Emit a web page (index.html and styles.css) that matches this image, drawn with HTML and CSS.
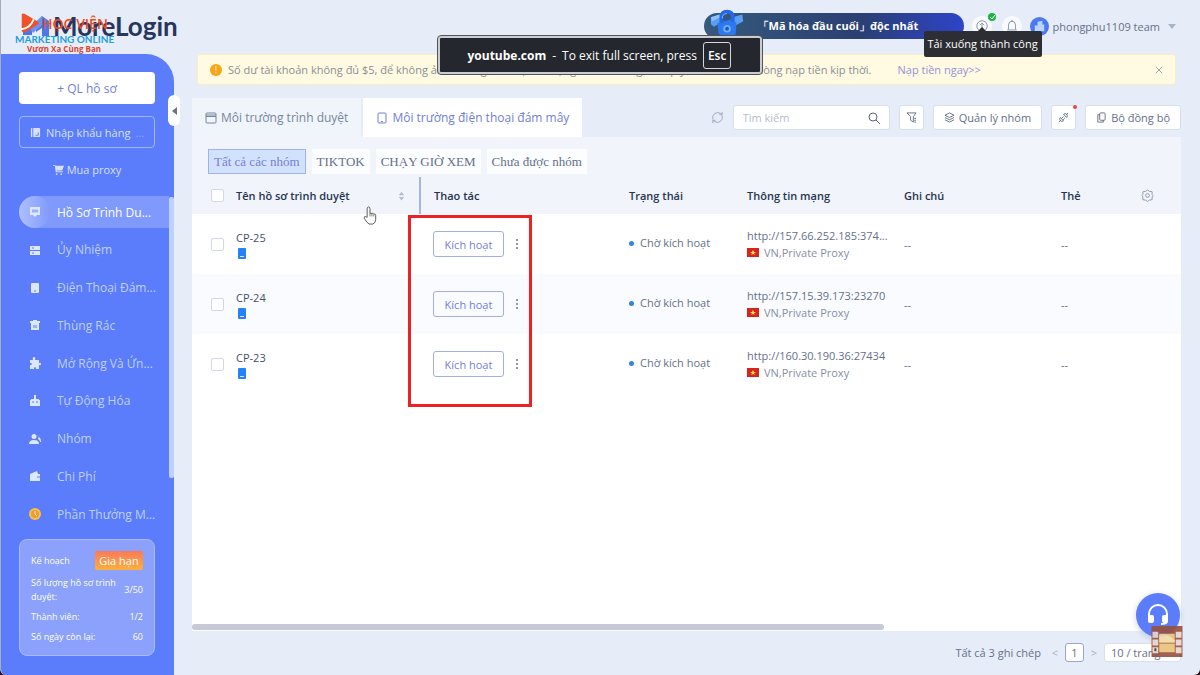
FILE: index.html
```html
<!DOCTYPE html>
<html lang="vi">
<head>
  <meta charset="UTF-8"/>
  <meta name="viewport" content="width=device-width,initial-scale=1.0"/>
  <title>MoreLogin</title>
  <link rel="stylesheet" href="styles.css">
</head>
<body>
<div class="app">
  <header class="topbar">
    <div class="brand">
      <svg class="brand-mark" viewBox="0 0 32 26"><path d="M2 22V4l9 8v10zM15 12l6-9 7 5v15h-7v-8l-6 4z" fill="#4b78e6"/><path d="M2 4l9 8 10-9v9l-9 8z" fill="#6d93f5"/></svg>
      <span class="brand-name">MoreLogin</span>
      <div class="watermark">
        <svg class="wm-play" viewBox="0 0 24 24"><path d="M3 3Q3 1 6 2l14 8q3 2 0 4L7 22q-4 1-4-2z" fill="#f0502a"/><path d="M2 19q10-1 14-11" fill="none" stroke="#fff" stroke-width="2"/></svg>
        <span class="wm-top">HỌC VIỆN</span>
        <span class="wm-mid">MARKETING ONLINE</span>
        <span class="wm-low">Vươn Xa Cùng Bạn</span>
      </div>
    </div>
    <a class="promo" href="#">
      <svg class="promo-art" viewBox="0 0 40 30"><path d="M2 8l9-3 3 8-9 5-3-3zM25 8l10-3 1 7-9 5z" fill="#5b9ff5"/><path d="M2 8l9-3 1 3-9 4z" fill="#8fc2ff"/><path d="M9 14l15-4 5 4-1 12-12 3-6-4z" fill="#2b78f2"/><path d="M13 14V8q0-6 6-6t6 6v5" fill="none" stroke="#2467e8" stroke-width="4"/><path d="M14 9q0-5 5-5" fill="none" stroke="#7db6ff"/><circle cx="19" cy="20" r="4" fill="#6fb0ff"/><circle cx="19" cy="20" r="2" fill="#1d56d4"/></svg>
      「Mã hóa đầu cuối」độc nhất
    </a>
    <button class="round" aria-label="Tải xuống">
      <svg viewBox="0 0 16 16"><circle cx="8" cy="8" r="6"/><path d="M8 11.500V5M5.500 7L8 4.500 10.500 7"/></svg>
      <span class="ok"><svg viewBox="0 0 8 8"><path d="M2 4l2 2 3-4"/></svg></span>
      <span class="tip">Tải xuống thành công</span>
    </button>
    <button class="round" aria-label="Thông báo"><svg viewBox="0 0 16 16"><path d="M2.500 12.500h11M4 12V7q0-4.500 4-4.500T12 7v5M6.500 14.500h3M8 1v1.500"/></svg></button>
    <button class="account">
      <svg class="avatar" viewBox="0 0 20 20"><circle cx="10" cy="10" r="10" fill="#4c78f0"/><path d="M5 15V9h3V5l5-1v11zM13 8h2v7h-2z" fill="#b9d5ff"/></svg>
      phongphu1109 team<span class="caret"></span>
    </button>
  </header>

  <div class="body">
    <aside class="sidebar">
      <button class="side-btn solid">+ QL hồ sơ</button>
      <button class="side-btn outline"><svg viewBox="0 0 12 12"><rect x="1" y="1" width="10" height="10" rx="1" fill="currentColor"/><path d="M3 1v10M6 9h3V6" stroke="#5b7cfb" fill="none"/></svg>Nhập khẩu hàng<span class="dots">...</span></button>
      <a class="side-link" href="#"><svg viewBox="0 0 12 12"><path d="M0 1h2l1 1h9l-2 5H4v1h7v1H3L2 2H0z" fill="currentColor"/><circle cx="4" cy="11" r="1" fill="currentColor"/><circle cx="9" cy="11" r="1" fill="currentColor"/></svg>Mua proxy</a>
      <nav class="menu">
        <a class="active" href="#"><span class="ico"><svg viewBox="0 0 12 12"><path d="M1 1h10v8H8l-2 2-2-2H1z"/><path class="cut" d="M4 3.500v3M6 3.500v3M8 3.500v3"/></svg></span>Hồ Sơ Trình Du...</a>
        <a href="#"><span class="ico"><svg viewBox="0 0 12 12"><path d="M1 2h10v4H1zM1 7h10v4H1z"/><path class="cut" d="M3 4h2M3 9h2"/></svg></span>Ủy Nhiệm</a>
        <a href="#"><span class="ico"><svg viewBox="0 0 12 12"><rect x="2" y="1" width="8" height="10" rx="1"/><path class="cut" d="M5 9h2"/></svg></span>Điện Thoại Đám...</a>
        <a href="#"><span class="ico"><svg viewBox="0 0 12 12"><path d="M1 2h3V1h4v1h3v2H1zM2 4h8v7H2z"/><path class="cut" d="M5 6v3M7 6v3"/></svg></span>Thùng Rác</a>
        <a href="#"><span class="ico"><svg viewBox="0 0 12 12"><path d="M1 3h3q-1-3 1-3t1 3h4v3q2-1 2 1t-2 1v4H7q0-2-1-2t-1 2H1V8q2 0 2-1T1 6z"/></svg></span>Mở Rộng Và Ứn...</a>
        <a href="#"><span class="ico"><svg viewBox="0 0 12 12"><path d="M5 0h2v4h3v1h1v6H1V5h1V4h3z"/><path class="cut" d="M4 6v2M8 6v2"/></svg></span>Tự Động Hóa</a>
        <a href="#"><span class="ico"><svg viewBox="0 0 12 12"><circle cx="5" cy="3.500" r="2.500"/><path d="M0 11q0-4 5-4t5 4zM8 2q3 1 1 4 2 1 2 3h1q0-3-1-4z"/></svg></span>Nhóm</a>
        <a href="#"><span class="ico"><svg viewBox="0 0 12 12"><path d="M1 4l7-3 1 3h2v7H1z"/><path class="cut" d="M11 7H8"/></svg></span>Chi Phí</a>
        <a href="#"><span class="ico"><svg viewBox="0 0 12 12"><circle cx="6" cy="6" r="6" fill="#f6c344"/><circle cx="6" cy="6" r="4" fill="#f09a3e"/><path d="M6 3v3l2 2" stroke="#ffe9a8" fill="none"/></svg></span>Phần Thưởng M...</a>
      </nav>
      <span class="side-scroll"></span>
      <button class="collapse" aria-label="Thu gọn"></button>
      <section class="plan">
        <div class="plan-row"><span>Kế hoạch</span><button class="renew">Gia hạn</button></div>
        <div class="plan-row"><span>Số lượng hồ sơ trình duyệt:</span><span>3/50</span></div>
        <div class="plan-row"><span>Thành viên:</span><span>1/2</span></div>
        <div class="plan-row"><span>Số ngày còn lại:</span><span>60</span></div>
      </section>
    </aside>

    <main class="content">
      <div class="alert">
        <span class="warn">!</span>
        <p>Số dư tài khoản không đủ $5, để không ảnh hưởng đến việc sử dụng bình thường của quý khách, xin vui lòng nạp tiền kịp thời.</p>
        <a href="#">Nạp tiền ngay&gt;&gt;</a>
        <button class="close" aria-label="Đóng"><svg viewBox="0 0 10 10"><path d="M1 1l8 8M9 1L1 9"/></svg></button>
      </div>

      <div class="toolbar">
        <div class="tabs">
          <button class="tab"><svg viewBox="0 0 12 12"><rect x="1" y="1" width="10" height="10" rx="1"/><path d="M1 3h10M1 4.500h10"/></svg>Môi trường trình duyệt</button>
          <button class="tab on"><svg viewBox="0 0 12 12"><rect x="2" y="1" width="8" height="10" rx="1"/><path d="M5 9.500h2"/></svg>Môi trường điện thoại đám mây</button>
        </div>
        <div class="tools">
          <button class="refresh" aria-label="Làm mới"><svg viewBox="0 0 14 14"><path d="M2 9a5.500 5.500 0 0 1 8-6.500l2 1.500M12 5a5.500 5.500 0 0 1-8 6.500L2 10M12 1v3H9M2 13v-3h3"/></svg></button>
          <label class="search"><input type="text" placeholder="Tìm kiếm" aria-label="Tìm kiếm"/><svg viewBox="0 0 12 12"><circle cx="5" cy="5" r="4"/><path d="M8 8l4 4"/></svg></label>
          <button class="tool" aria-label="Bộ lọc"><svg viewBox="0 0 12 12"><path d="M1 1h10L8 5v6l-3-2V5zM9 7h2M9 9h2M9 11h2"/></svg></button>
          <button class="tool"><svg viewBox="0 0 12 12"><path d="M6 1l5 2.500L6 6 1 3.500zM1 6l5 2.500L11 6M1 8.500L6 11l5-2.500"/></svg>Quản lý nhóm</button>
          <button class="tool" aria-label="Kết nối"><svg viewBox="0 0 12 12"><path d="M1 11l2-2M9 3l2-2M2.500 6l3.500 3.500q-2 1.500-3.500 0t0-3.500zM6 2.500L9.500 6q1.500-2 0-3.500T6 2.500zM4 7l2-2M5.500 8.500l2-2"/></svg><span class="red-dot"></span></button>
          <button class="tool"><svg viewBox="0 0 12 12"><rect x="4" y="1" width="6" height="8" rx="1"/><path d="M4 3H2v8h6V9"/></svg>Bộ đồng bộ</button>
        </div>
      </div>

      <section class="panel">
        <div class="groups">
          <button class="group on">Tất cả các nhóm</button>
          <button class="group">TIKTOK</button>
          <button class="group">CHẠY GIỜ XEM</button>
          <button class="group">Chưa được nhóm</button>
        </div>
        <table>
          <colgroup><col class="c-check"/><col class="c-name"/><col class="c-act"/><col class="c-state"/><col class="c-net"/><col class="c-note"/><col/><col class="c-gear"/></colgroup>
          <thead>
            <tr>
              <th><input type="checkbox" aria-label="Chọn tất cả"/></th>
              <th><div class="sortable">Tên hồ sơ trình duyệt<svg viewBox="0 0 8 12"><path d="M4 1l3 4H1zM4 11L1 7h6z"/></svg></div></th>
              <th>Thao tác</th><th>Trạng thái</th><th>Thông tin mạng</th><th>Ghi chú</th><th>Thẻ</th>
              <th><svg class="gear" viewBox="0 0 14 14"><path d="M7 1l2 1.500 3 .5v3L13 7l-1 1.500v3l-3 .5-2 1.500L5 12l-3-.5v-3L1 7l1-1V3l3-.5z"/><circle cx="7" cy="7" r="2"/></svg></th>
            </tr>
          </thead>
          <tbody>
            <tr>
              <td><input type="checkbox" aria-label="CP-25"/></td>
              <td class="name">CP-25<span class="phone"></span></td>
              <td><div class="actions"><button class="activate">Kích hoạt</button><button class="more" aria-label="Thêm"><svg viewBox="0 0 2 10"><path d="M0 0h2v2H0zM0 4h2v2H0zM0 8h2v2H0z"/></svg></button></div></td>
              <td class="state">Chờ kích hoạt</td>
              <td class="net">http://157.66.252.185:374...<span class="proxy"><svg viewBox="0 0 12 9"><path fill="#d6251f" d="M0 0h12v9H0z"/><path fill="#ffe14d" d="M6 2l1 2h2L7 5.500 8 7 6 6 4 7l1-1.500L3 4h2z"/></svg>VN,Private Proxy</span></td>
              <td>--</td><td>--</td><td></td>
            </tr>
            <tr>
              <td><input type="checkbox" aria-label="CP-24"/></td>
              <td class="name">CP-24<span class="phone"></span></td>
              <td><div class="actions"><button class="activate">Kích hoạt</button><button class="more" aria-label="Thêm"><svg viewBox="0 0 2 10"><path d="M0 0h2v2H0zM0 4h2v2H0zM0 8h2v2H0z"/></svg></button></div></td>
              <td class="state">Chờ kích hoạt</td>
              <td class="net">http://157.15.39.173:23270<span class="proxy"><svg viewBox="0 0 12 9"><path fill="#d6251f" d="M0 0h12v9H0z"/><path fill="#ffe14d" d="M6 2l1 2h2L7 5.500 8 7 6 6 4 7l1-1.500L3 4h2z"/></svg>VN,Private Proxy</span></td>
              <td>--</td><td>--</td><td></td>
            </tr>
            <tr>
              <td><input type="checkbox" aria-label="CP-23"/></td>
              <td class="name">CP-23<span class="phone"></span></td>
              <td><div class="actions"><button class="activate">Kích hoạt</button><button class="more" aria-label="Thêm"><svg viewBox="0 0 2 10"><path d="M0 0h2v2H0zM0 4h2v2H0zM0 8h2v2H0z"/></svg></button></div></td>
              <td class="state">Chờ kích hoạt</td>
              <td class="net">http://160.30.190.36:27434<span class="proxy"><svg viewBox="0 0 12 9"><path fill="#d6251f" d="M0 0h12v9H0z"/><path fill="#ffe14d" d="M6 2l1 2h2L7 5.500 8 7 6 6 4 7l1-1.500L3 4h2z"/></svg>VN,Private Proxy</span></td>
              <td>--</td><td>--</td><td></td>
            </tr>
          </tbody>
        </table>
        <div class="highlight"></div>
        <svg class="hand" viewBox="0 0 16 20"><path d="M5 12V3q0-2 1.500-2T8 3v5q1-1 2 0 1-1 2 .500 2-.500 2 1.500v4q0 4-3 5H7q-2-1-5-6-.500-2 1-2z" fill="#fff" stroke="#555"/><path d="M8 8v3M10 8v3M12 9v2" stroke="#777" fill="none"/></svg>
        <div class="hscroll"><span></span></div>
      </section>

      <footer class="pager">
        <span class="total">Tất cả 3 ghi chép</span>
        <button class="arrow" aria-label="Trang trước">&lt;</button>
        <button class="page">1</button>
        <button class="arrow" aria-label="Trang sau">&gt;</button>
        <select aria-label="Số dòng"><option>10 / trang</option></select>
      </footer>
    </main>
  </div>

  <button class="support" aria-label="Hỗ trợ"><svg viewBox="0 0 24 24"><path d="M3 14v-3a9 9 0 0 1 18 0v7q0 3-6 3" fill="none" stroke="#fff" stroke-width="2"/><rect x="2" y="12" width="6" height="8" rx="2" fill="#fff"/><rect x="16" y="12" width="6" height="8" rx="2" fill="#fff"/></svg></button>
  <svg class="cabinet" viewBox="0 0 32 32"><path fill="#96503f" d="M0 0h32v32H0z"/><path fill="#e8c27a" d="M8 8h16v9H8zM8 18h16v9H8z"/><path fill="#f3dca6" d="M8 9q8-3 16 6v2H8z"/><path fill="#e9d5cf" d="M1 6h6v6H1zM1 14h6v6H1zM1 22h6v6H1zM25 6h6v6h-6zM25 14h6v6h-6zM25 22h6v6h-6z"/><path d="M4 23v3" stroke="#333" stroke-width="2"/></svg>

  <div class="fullscreen-note"><b>youtube.com</b><span>-</span><span>To exit full screen, press</span><kbd>Esc</kbd></div>
</div>
</body>
</html>
```
FILE: styles.css
```css
:root{--blue:#5b7cfb;--bg:#e7edf8;--text:#65708a;--dark:#27344f;--line:#d9dfeb;--violet:#7380d6}
*{box-sizing:border-box}
body{margin:0;background:#2b1220;font-family:"Open Sans","Noto Sans",sans-serif;font-size:11px;color:var(--text)}
button,input,select{font:inherit;color:inherit}
button{display:inline-flex;align-items:center;justify-content:center;padding:0;border:0;background:none;cursor:pointer;white-space:nowrap}
a{color:inherit;text-decoration:none}
svg{display:block;flex:none}
.app{position:relative;display:flex;flex-direction:column;min-height:100vh;background:var(--bg);border-left:1px solid #a9adba;border-radius:0 0 6px 6px;overflow:hidden}

/* top bar */
.topbar{display:flex;align-items:center;height:54px;padding:0 24px 2px 20px;gap:8px}
.brand{position:relative;display:flex;align-items:center;margin-right:auto}
.brand-mark{width:32px;height:26px}
.brand-name{font-family:Lato,sans-serif;font-size:26px;font-weight:700;color:#26365c}
.watermark{position:absolute;left:-6px;top:4px;width:98px;text-align:center;font-weight:700;white-space:nowrap}
.watermark span{display:block}
.wm-play{position:absolute;left:4px;top:-2px;width:22px;height:22px}
.wm-top{font-size:14px;line-height:20px;padding-left:22px;font-weight:600;color:#ee4a22}
.wm-mid{font-family:Lato,sans-serif;font-size:10px;line-height:10px;color:#1f9ddd}
.wm-low{font-size:8px;line-height:9px;color:#d8432f}
.promo{position:relative;display:flex;align-items:center;height:26px;width:260px;padding-left:54px;border-radius:13px;background:linear-gradient(90deg,#355a7c,#2b3f73 60%,#2d44c8);color:#fff;font-weight:700;white-space:nowrap}
.promo-art{position:absolute;left:5px;top:-4px;width:38px;height:30px}
.round{position:relative;width:20px;height:20px;border-radius:50%;background:#f8faff}
.round svg{width:14px;height:14px;fill:none;stroke:#808a9e}
.round+.round{margin-left:2px}
.ok{position:absolute;right:-4px;top:-3px;width:8px;height:8px;border-radius:50%;background:#1bb342}
.round .ok svg{width:8px;height:8px;stroke:#fff}
.tip{position:absolute;z-index:3;top:15px;left:-48px;width:118px;line-height:26px;border-radius:2px;background:#2c2e33;color:#fff}
.tip::before{content:"";position:absolute;left:53px;top:-4px;border:5px solid transparent;border-top:0;border-bottom-color:#2c2e33}
.account{gap:4px}
.avatar{width:19px;height:19px}
.caret{margin-left:4px;border:4px solid transparent;border-bottom:0;border-top:5px solid #a6b4c8}

/* sidebar */
.body{display:flex;flex:1}
.sidebar{position:relative;display:flex;flex-direction:column;width:173px;padding:18px 19px 19px 18px;border-radius:0 28px 0 0;background:var(--blue);color:#d6e0ff}
.side-btn{height:32px;margin-bottom:12px;border-radius:4px;font-size:12px}
.solid{background:#fff;color:var(--violet)}
.outline{gap:5px;border:1px solid #a3b5fd;font-size:11px}
.outline svg,.side-link svg{width:11px;height:11px}
.dots{color:#94a8fc}
.side-link{display:flex;align-items:center;justify-content:center;gap:3px;height:18px}
.menu{display:flex;flex-direction:column;flex:1;justify-content:space-between;margin:18px -14px 9px 0}
.menu a{display:flex;align-items:center;gap:6px;height:32px;border-radius:16px 0 0 16px;font-size:12px;white-space:nowrap;color:#bfd0ff}
.menu .active{background:#7f99fc;color:#fff}
.ico{display:flex;align-items:center;justify-content:center;width:32px;height:32px;border-radius:50%}
.active .ico{background:linear-gradient(90deg,#aebffe,#7f99fc)}
.ico svg{width:12px;height:12px;fill:#dce8ff}
.ico .cut{fill:none;stroke:var(--blue)}
.side-scroll{position:absolute;right:0;top:143px;width:5px;height:281px;border-radius:2px;background:#bdd2fb}
.collapse{position:absolute;z-index:2;right:-6px;top:41px;width:12px;height:31px;border-radius:6px;background:#fff}
.collapse::before{content:"";border:4px solid transparent;border-left:0;border-right:5px solid #6b7280}
.plan{display:flex;flex-direction:column;gap:6px;padding:11px;border:1px solid #a9bafd;border-radius:8px;background:#8ba1fb;color:#fff;font-size:9px;line-height:14px}
.plan-row{display:flex;align-items:center;justify-content:space-between;gap:4px}
.renew{height:19px;width:48px;border-radius:2px;background:linear-gradient(#fa7a58,#fbb03c);font-size:11px}

/* content */
.content{display:flex;flex-direction:column;flex:1;min-width:0;padding:0 19px 13px 18px}
.alert{display:flex;align-items:center;height:31px;margin:0 5px 13px;padding:0 12px;border:1px solid #f7edc6;border-radius:3px;background:#fffae1;color:#8b8f96}
.alert p{margin:0 26px 0 6px;white-space:nowrap}
.alert a{color:#9990d8}
.warn{width:12px;height:12px;border-radius:50%;background:#f5a516;color:#fff;font-size:9px;line-height:12px;text-align:center}
.close{margin-left:auto}
.close svg{width:8px;height:8px;fill:none;stroke:#8790a3}
.toolbar,.tabs,.tools{display:flex;align-items:center}
.toolbar{justify-content:space-between}
.tabs{gap:2px}
.tab{height:39px;padding:0 13px;gap:4px;background:#f0f4fb;font-size:12px;color:#77869b}
.tab svg{width:12px;height:12px;fill:none;stroke:currentColor}
.tab.on{background:#fff;color:var(--violet)}
.tools{gap:9px}
.refresh svg{width:13px;height:13px;fill:none;stroke:#9aa5b5}
.search{display:flex;align-items:center;width:157px;height:25px;padding:0 9px;border:1px solid var(--line);border-radius:3px;background:#fff}
.search input{flex:1;min-width:0;padding:0;border:0;outline:0;background:none}
.search input::placeholder{color:#b7bdc8}
.search svg{width:12px;height:12px;fill:none;stroke:#5b6478}
.tool{position:relative;min-width:25px;height:25px;padding:0 10px;gap:4px;border:1px solid var(--line);border-radius:3px;background:#fff}
.tool[aria-label]{padding:0 6px}
.tool svg{width:11px;height:11px;fill:none;stroke:#626c80}
.red-dot{position:absolute;right:-2px;top:-1px;width:4px;height:4px;border-radius:50%;background:#ef4444}

.panel{position:relative;display:flex;flex-direction:column;flex:1;background:#fff}
.groups{display:flex;gap:6px;padding:12px 16px 3px;background:#f1f4fb}
.group{height:25px;padding:0 5px;background:#fcfdff;font-family:"Liberation Serif",serif;font-size:13px}
.group.on{border:1px solid #9db2ee;background:#d3e2fc;color:var(--violet)}
table{width:100%;border-collapse:collapse;table-layout:fixed}
.c-check{width:44px}.c-name{width:184px}.c-act{width:196px}.c-state{width:118px}.c-net{width:157px}.c-note{width:157px}.c-gear{width:53px}
th,td{padding:0 0 0 13px;text-align:left;white-space:nowrap}
th{height:37px;background:#f1f4fb;color:var(--dark);font-weight:600}
th:first-child,td:first-child{padding-left:19px}
th:nth-child(2),td:nth-child(2){padding-left:0}
th:nth-child(2){border-right:2px solid #a8b5e2}
td{height:60px}
tbody tr:nth-child(even){background:#f9fbfe}
input[type=checkbox]{display:block;appearance:none;width:13px;height:13px;margin:0;border:1px solid #d3d8e4;border-radius:2px;background:#fff}
.sortable{display:flex;align-items:center;justify-content:space-between;padding-right:14px}
.sortable svg{width:7px;height:12px;fill:#b3bdcd}
.gear{width:13px;height:13px;fill:none;stroke:#8b97ab}
.name{color:#45516a}
.phone{display:block;width:8px;height:11px;margin:3px 0 0 2px;border-radius:1px;background:linear-gradient(#d4e7ff,#d4e7ff) 50% 8px/4px 1px no-repeat #2583f7}
.actions{display:flex;align-items:center;gap:8px}
.activate{width:71px;height:26px;border:1px solid #a5afe4;border-radius:3px;color:var(--violet)}
.more{width:10px;height:20px}
.more svg{width:2px;height:10px;fill:#8f97a8}
.state{padding-bottom:4px}
.state::before{content:"";display:inline-block;width:5px;height:5px;margin-right:6px;border-radius:50%;background:#2f86dd;vertical-align:middle}
.net{line-height:17px}
.proxy{display:flex;align-items:center;gap:5px;color:#8690a8}
.proxy svg{width:12px;height:9px}
.highlight{position:absolute;left:216px;top:78px;width:124px;height:192px;border:3px solid #ee2024}
.hand{position:absolute;left:170px;top:69px;width:16px;height:19px}
.hscroll{margin-top:auto;height:7px}
.hscroll span{display:block;width:70%;height:6px;border-radius:3px;background:#c5cad6}

.pager{display:flex;align-items:center;justify-content:flex-end;gap:5px;padding-top:12px}
.total{margin-right:4px}
.page{width:19px;height:19px;border:1px solid #9aa4d8;border-radius:3px;background:#fff}
.arrow{width:10px;color:#aab2c2}
.pager select{width:77px;height:19px;padding:0 6px;border:1px solid var(--line);border-radius:3px;background:#fff;appearance:none}
.support{position:absolute;right:20px;bottom:38px;width:44px;height:44px;border-radius:50%;background:var(--blue);box-shadow:0 2px 6px rgba(60,80,160,.25)}
.support svg{width:24px;height:24px}
.cabinet{position:absolute;right:17px;bottom:18px;width:32px;height:31px;opacity:.9}
.fullscreen-note{position:absolute;z-index:4;left:0;right:2px;top:36px;display:flex;align-items:center;width:324px;height:38px;margin:auto;padding-left:28px;gap:6px;border:2px solid #c9ccd4;outline:1px solid #555;border-radius:3px;background:#24272d;color:#fff;font-size:12px;white-space:nowrap}
kbd{padding:4px;border:1px solid #d4d6da;border-radius:3px;font:inherit;font-weight:600}
```
